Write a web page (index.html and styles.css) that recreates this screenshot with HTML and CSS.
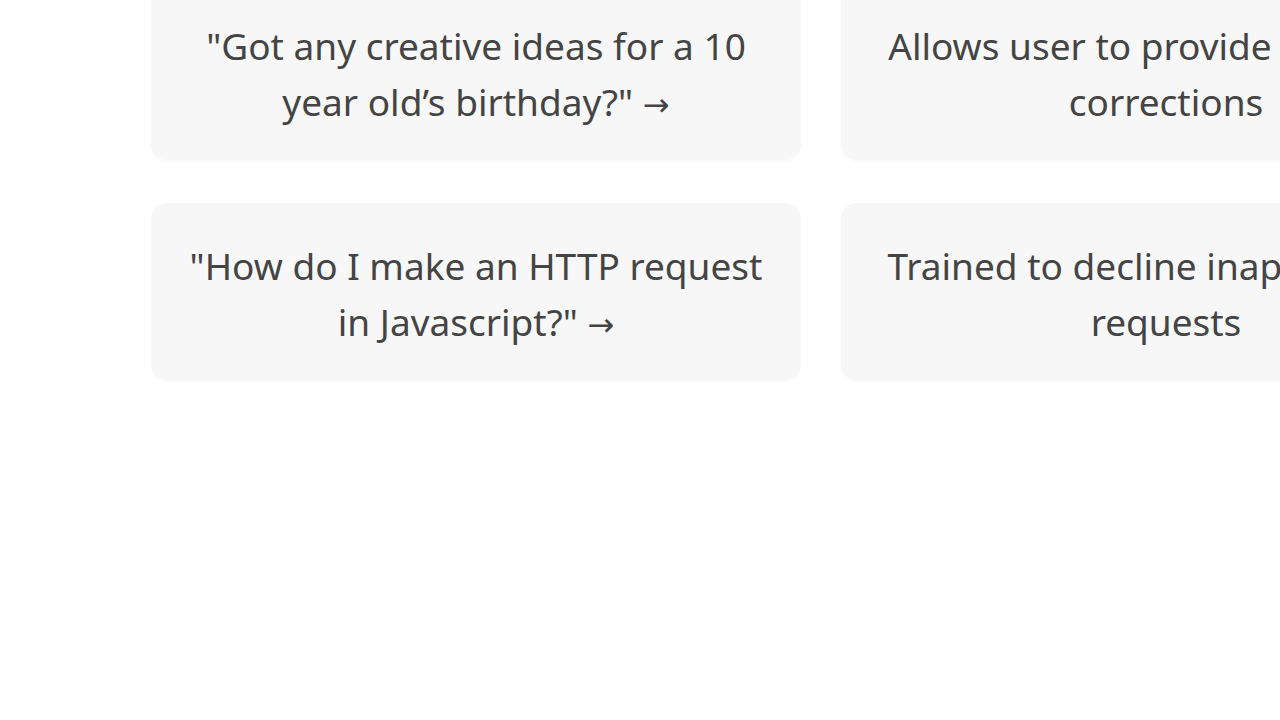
FILE: index.html
```html
<!DOCTYPE html>
<html lang="en">
<head>
<meta charset="utf-8">
<title>Examples</title>
<link rel="stylesheet" href="styles.css">
</head>
<body>
<main class="page">
  <div class="grid">
    <button class="card"><span class="text">"Got any creative ideas for a 10 year old’s birthday?" <span class="arrow">→</span></span></button>
    <div class="card"><span class="text">Allows user to provide follow-up corrections</span></div>
    <button class="card"><span class="text">"How do I make an HTTP request in Javascript?" <span class="arrow">→</span></span></button>
    <div class="card"><span class="text">Trained to decline inappropriate requests</span></div>
  </div>
</main>
</body>
</html>
```
FILE: styles.css
```css
html, body {
  margin: 0;
  padding: 0;
  width: 1280px;
  height: 720px;
  overflow: hidden;
  background: #ffffff;
}
.page {
  padding-left: 151px;
  margin-top: -17px;
}
.grid {
  display: grid;
  grid-template-columns: 650px 650px;
  column-gap: 40px;
  row-gap: 43px;
}
.card {
  box-sizing: border-box;
  height: 177px;
  padding: 35px 32px 31px;
  border: 0;
  border-radius: 16px;
  background: #f7f7f8;
  color: #444444;
  font-family: "Noto Sans", "Open Sans", sans-serif;
  font-size: 37px;
  line-height: 56px;
  text-align: center;
  display: flex;
  align-items: center;
  justify-content: center;
  box-shadow: 0 2px 3px rgba(0,0,0,0.02);
}
.text {
  display: block;
}
.arrow {
  font-family: "DejaVu Sans", sans-serif;
  font-size: 32px;
  line-height: 1;
}
```
